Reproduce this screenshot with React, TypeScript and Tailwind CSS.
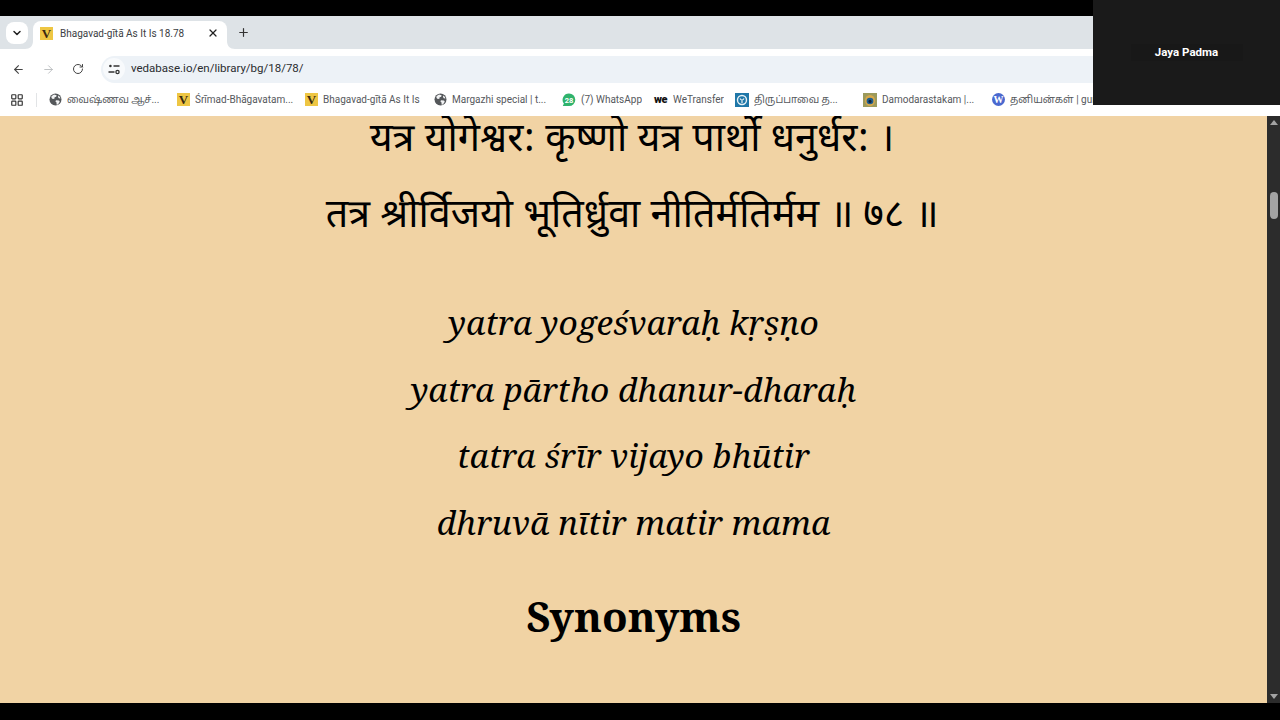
import { ArrowLeft, ArrowRight, ChevronDown, LayoutGrid, Plus, RotateCw, X } from "lucide-react";

const sans = "font-['Roboto','Noto_Sans','Noto_Sans_Tamil','Liberation_Sans',sans-serif]";

function VIcon() {
  return (
    <span className="flex h-[13px] w-[13px] shrink-0 items-center justify-center bg-[#eec643] font-['Liberation_Serif',serif] text-[13px] font-bold leading-none text-[#3a2a10]">
      V
    </span>
  );
}

function GlobeIcon() {
  return (
    <svg width="13" height="13" viewBox="0 0 13 13" className="shrink-0">
      <circle cx="6.5" cy="6.5" r="6" fill="#54575a" />
      <path d="M2.5 3.2 5 1.6l2.6.6-.4 1.6-1.6.5-.2 1.5L3.8 6 2.5 5zM7 7.2l3 .4.8 1.2-1.9 2.6-1.2.3-.3-2.4-1-.9z" fill="#f1f2f3" />
      <path d="M9.2 2.4 11 4l.4 1.6-1.6-.3-.8-1.2z" fill="#f1f2f3" />
    </svg>
  );
}

function WhatsAppIcon() {
  return (
    <svg width="14" height="14" viewBox="0 0 14 14" className="shrink-0">
      <path d="M7 .5a6.3 6.3 0 0 1 0 12.6H.8l1.1-2.5A6.3 6.3 0 0 1 7 .5z" fill="#2fb36c" />
      <text x="7" y="9.6" textAnchor="middle" fontSize="7.5" fontWeight="700" fill="#fff">
        28
      </text>
    </svg>
  );
}

function WeIcon() {
  return <span className="w-[14px] shrink-0 text-[11px] font-black leading-none tracking-[-0.5px] text-[#111]">we</span>;
}

function TiruppavaiIcon() {
  return (
    <svg width="14" height="14" viewBox="0 0 14 14" className="shrink-0">
      <rect width="14" height="14" fill="#1f77a8" />
      <circle cx="7" cy="7" r="4.5" fill="none" stroke="#e8f2f6" strokeWidth="1.4" />
      <path d="M5 5.5c1 2 3 2 4 0M7 7v3" fill="none" stroke="#e8f2f6" strokeWidth="1.2" />
    </svg>
  );
}

function PeacockIcon() {
  return (
    <svg width="14" height="14" viewBox="0 0 14 14" className="shrink-0">
      <rect width="14" height="14" fill="#9c9a5c" />
      <ellipse cx="7" cy="7.5" rx="5" ry="5.5" fill="#d8a84a" />
      <ellipse cx="7" cy="8" rx="3.4" ry="3.2" fill="#1e5f8f" />
      <circle cx="7" cy="8.4" r="1.6" fill="#12233a" />
    </svg>
  );
}

function WordpressIcon() {
  return (
    <span className="flex h-[13px] w-[13px] shrink-0 items-center justify-center rounded-full bg-[#4a69cf] font-['Liberation_Serif',serif] text-[10px] font-bold leading-none text-white">
      W
    </span>
  );
}

function SiteInfoIcon() {
  return (
    <svg width="12" height="12" viewBox="0 0 12 12" fill="none" stroke="#333" strokeWidth="1.3">
      <circle cx="2.4" cy="3" r="1.3" fill="#333" stroke="none" />
      <path d="M5.5 3H11.5M.5 9H6.5" />
      <circle cx="9.5" cy="9" r="1.6" />
    </svg>
  );
}

const bookmarks = [
  { icon: <GlobeIcon />, label: "வைஷ்ணவ ஆச்...", w: "w-[128px]" },
  { icon: <VIcon />, label: "Śrīmad-Bhāgavatam...", w: "w-[128px]" },
  { icon: <VIcon />, label: "Bhagavad-gītā As It Is", w: "w-[129px]" },
  { icon: <GlobeIcon />, label: "Margazhi special | t...", w: "w-[128px]" },
  { icon: <WhatsAppIcon />, label: "(7) WhatsApp", w: "w-[92px]" },
  { icon: <WeIcon />, label: "WeTransfer", w: "w-[81px]" },
  { icon: <TiruppavaiIcon />, label: "திருப்பாவை த...", w: "w-[128px]" },
  { icon: <PeacockIcon />, label: "Damodarastakam |...", w: "w-[129px]" },
  { icon: <WordpressIcon />, label: "தனியன்கள் | guruparamparai", w: "w-[200px]" },
];

const verse = ["yatra yogeśvaraḥ kṛṣṇo", "yatra pārtho dhanur-dharaḥ", "tatra śrīr vijayo bhūtir", "dhruvā nītir matir mama"];

export default function App() {
  return (
    <div className={`relative flex h-[720px] w-[1280px] flex-col overflow-hidden bg-black ${sans}`}>
      <div className="h-4 shrink-0 bg-black" />

      {/* tab strip */}
      <div className="flex h-[33px] shrink-0 items-end bg-[#dee3e7] pl-[6px]">
        <div className="mb-[5px] flex h-[22px] w-[22px] items-center justify-center rounded-lg bg-white">
          <ChevronDown className="h-[12px] w-[12px] text-[#222]" strokeWidth={3} />
        </div>
        <div className="relative ml-[5px] flex h-[28px] w-[194px] items-center rounded-t-lg bg-white pb-[4px] pl-[7px] pr-[8px]">
          <VIcon />
          <span className="ml-[7px] flex-1 truncate text-[10px] text-[#3c4043]">Bhagavad-gītā As It Is 18.78</span>
          <X className="h-[12px] w-[12px] text-[#222]" strokeWidth={2.5} />
          <svg width="8" height="8" viewBox="0 0 8 8" className="absolute bottom-0 -right-[8px]">
            <path d="M0 0C0 5 3 8 8 8H0z" fill="#fff" />
          </svg>
          <svg width="8" height="8" viewBox="0 0 8 8" className="absolute bottom-0 -left-[8px]">
            <path d="M8 0C8 5 5 8 0 8H8z" fill="#fff" />
          </svg>
        </div>
        <Plus className="mb-[10px] ml-[10px] h-[13px] w-[13px] text-[#333]" strokeWidth={2.2} />
      </div>

      {/* address bar */}
      <div className="flex h-[34px] shrink-0 items-center bg-white pl-[12px] pt-[6px]">
        <ArrowLeft className="h-[13px] w-[13px] text-[#444]" strokeWidth={2} />
        <ArrowRight className="ml-[17px] h-[13px] w-[13px] text-[#b5b8bb]" strokeWidth={1.6} />
        <RotateCw className="ml-[17px] h-[12px] w-[12px] text-[#444]" strokeWidth={2} />
        <div className="ml-[17px] flex h-[27px] flex-1 items-center rounded-l-full bg-[#edf2f7] pl-[2px]">
          <div className="flex h-[22px] w-[22px] items-center justify-center rounded-full bg-[#f8fafc]">
            <SiteInfoIcon />
          </div>
          <span className="ml-[6px] text-[11.5px] text-[#2a2c2f]">vedabase.io/en/library/bg/18/78/</span>
        </div>
      </div>

      {/* bookmarks */}
      <div className="flex h-[33px] shrink-0 items-center overflow-hidden bg-white pl-[10px]">
        <LayoutGrid className="h-[14px] w-[14px] shrink-0 text-[#333]" strokeWidth={2} />
        <div className="ml-[12px] h-[14px] w-px shrink-0 bg-[#e2e4e6]" />
        <div className="ml-[12px] flex items-center">
          {bookmarks.map((b) => (
            <div key={b.label} className={`flex shrink-0 items-center gap-[5px] ${b.w}`}>
              {b.icon}
              <span className="truncate text-[10px] text-[#55585c]">{b.label}</span>
            </div>
          ))}
        </div>
      </div>

      {/* page */}
      <div className="flex h-[587px] shrink-0 overflow-hidden">
        <main className="flex-1 overflow-hidden bg-[#f1d3a4] text-center text-black">
          <div className="-mt-[12px] pr-[3px] font-['Noto_Sans_Devanagari','Lohit_Devanagari','Noto_Sans','DejaVu_Sans',sans-serif] text-[39.5px] leading-[76px]">
            <p>यत्र योगेश्वर: कृष्णो यत्र पार्थो धनुर्धर: ।</p>
            <p>तत्र श्रीर्विजयो भूतिर्ध्रुवा नीतिर्मतिर्मम ॥ ७८ ॥</p>
          </div>
          <div className="mt-[33px] font-['Noto_Serif','DejaVu_Serif','Liberation_Serif',serif] text-[33.5px] italic leading-[66.7px]">
            {verse.map((line) => (
              <p key={line}>{line}</p>
            ))}
          </div>
          <h2 className="mt-[30px] font-['Noto_Serif','DejaVu_Serif','Liberation_Serif',serif] text-[42px] font-bold leading-[60px]">
            Synonyms
          </h2>
        </main>
        <div className="flex w-[13px] shrink-0 flex-col items-center bg-[#2c2c2c]">
          <div className="mt-[4px] h-0 w-0 border-x-[4px] border-b-[5px] border-x-transparent border-b-[#a3a3a3]" />
          <div className="mt-[67px] h-[27px] w-[8px] rounded-full bg-[#a3a3a3]" />
          <div className="mb-[4px] mt-auto h-0 w-0 border-x-[4px] border-t-[5px] border-x-transparent border-t-[#a3a3a3]" />
        </div>
      </div>

      {/* participant tile */}
      <div className="absolute right-0 top-0 flex h-[105px] w-[187px] items-center justify-center bg-[#1a1a1a]">
        <span className="flex h-[17px] w-[112px] items-center justify-center bg-[#181818] pt-px text-[11.5px] font-bold text-white">
          Jaya Padma
        </span>
      </div>
    </div>
  );
}
